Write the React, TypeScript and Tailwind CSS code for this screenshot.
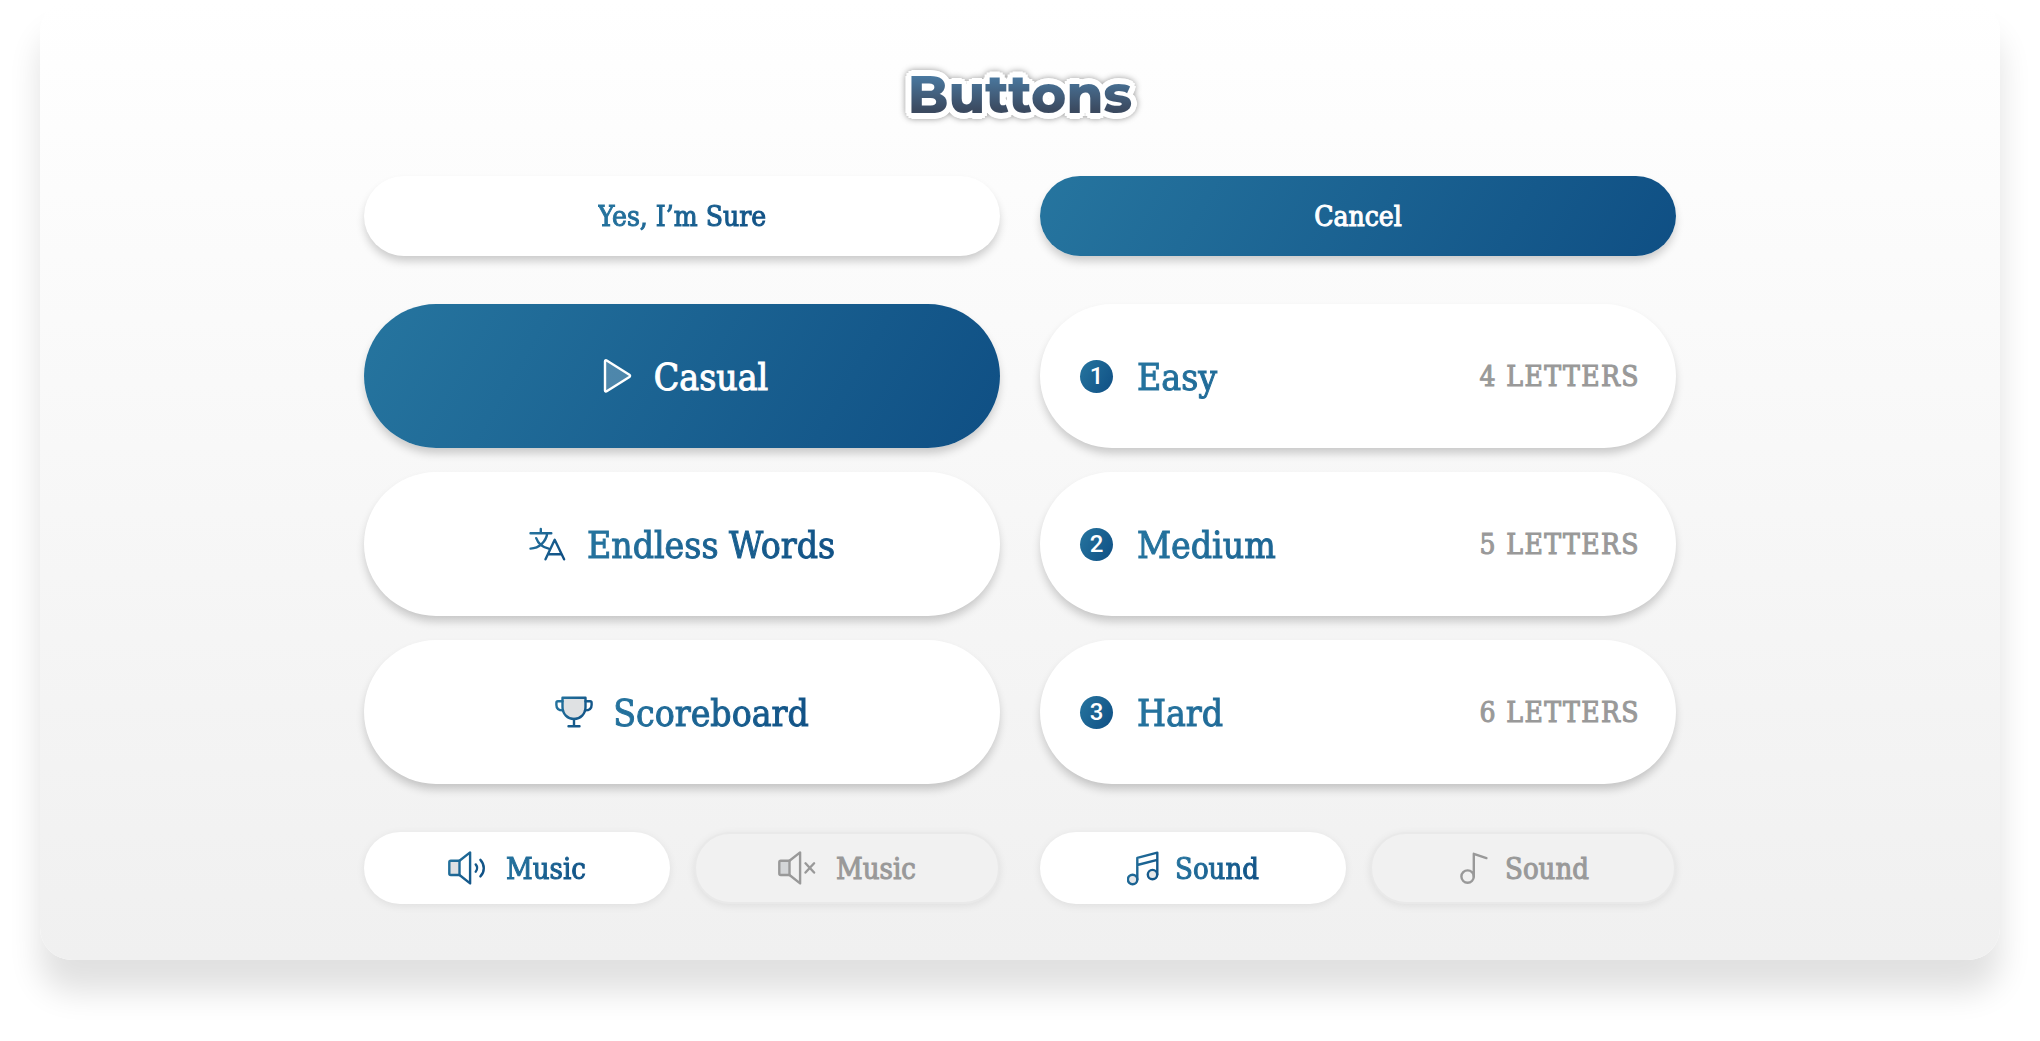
import { ReactNode } from 'react'
import clsx from 'clsx'

const slab = `font-['Roboto_Slab','DejaVu_Serif_Condensed','DejaVu_Serif',serif] [-webkit-text-stroke:1px]`
const fill = 'bg-[linear-gradient(120deg,#26759f,#0f4f84)]'
const gradientText = `${fill} bg-clip-text text-transparent`
const raised = 'shadow-[0_6px_10px_-1px_rgba(0,0,0,0.2)]'
// ring of shadows, gives the title a rounded white outline
const outline =
  'before:[text-shadow:6px_0_white,5px_3px_white,3px_5px_white,0_6px_white,-3px_5px_white,-5px_3px_white,-6px_0_white,-5px_-3px_white,-3px_-5px_white,0_-6px_white,3px_-5px_white,5px_-3px_white]'

function Gradients() {
  return (
    <svg width="0" height="0" className="absolute" aria-hidden="true">
      <defs>
        <linearGradient id="blue" gradientUnits="userSpaceOnUse" x1="0" y1="8" x2="36" y2="28">
          <stop offset="0" stopColor="#26759f" />
          <stop offset="1" stopColor="#0f4f84" />
        </linearGradient>
      </defs>
    </svg>
  )
}

function Icon({ width = 38, color = 'url(#blue)', children }: { width?: number; color?: string; children: ReactNode }) {
  return (
    <svg
      width={width}
      height="40"
      viewBox={`0 0 ${width} 40`}
      fill="none"
      stroke={color}
      strokeWidth="2.4"
      strokeLinecap="round"
      strokeLinejoin="round"
      className="shrink-0"
      aria-hidden="true"
    >
      {children}
    </svg>
  )
}

function PlayIcon() {
  return (
    <Icon color="#ffffff">
      <path d="M9 5.4c0-1 .9-1.400 1.700-.9l22.700 14.200c.9.600.9 1.600 0 2.200L10.700 35.300c-.8.5-1.700.1-1.700-.9z" fill="#ffffff" fillOpacity=".22" />
    </Icon>
  )
}

function TranslateIcon() {
  return (
    <Icon>
      <path d="M1.500 9.300H22.300M11.800 5v4.300M18.300 9.300C17 17.500 10.500 24.300 1.500 24.600M7.200 14.200c2 5.400 6.500 9.300 12.500 10.400M16.500 35.300l9.200-19.500 9.400 19.500M19.200 30.300h13.400" />
    </Icon>
  )
}

function TrophyIcon() {
  return (
    <Icon>
      <path d="M7.500 5.700h23v9.300c0 7-5 12-11.500 12S7.500 22 7.500 15z" fill="#808890" fillOpacity=".25" />
      <path d="M19 27v7.300M13.500 34.300h11M7.500 9.300H2.900c-.9 0-1.500.6-1.500 1.500v2.200c0 3.400 2.400 5.400 6.600 5.400M30.500 9.300h4.600c.9 0 1.500.6 1.500 1.500v2.200c0 3.400-2.400 5.400-6.600 5.400" />
    </Icon>
  )
}

function SpeakerIcon({ off }: { off?: boolean }) {
  return (
    <Icon color={off ? '#999999' : undefined}>
      <path d="M11.500 12.800H2.800c-.9 0-1.500.6-1.500 1.500v11.200c0 .9.600 1.500 1.500 1.500h8.700z" fill="#808890" fillOpacity=".25" />
      <path d="M11.500 12.800 22.100 4.400v31L11.500 27" />
      {off ? (
        <path d="m27.500 15.300 8.600 9.200M36.100 15.300l-8.600 9.200" />
      ) : (
        <path d="M27.700 16.400c1.800 2.100 1.800 5.200 0 7.300M32.400 11.800c4.500 4.700 4.500 12 0 16.600" />
      )}
    </Icon>
  )
}

function NotesIcon() {
  return (
    <Icon width={32}>
      <circle cx="5.600" cy="31.500" r="4.700" fill="#808890" fillOpacity=".2" />
      <circle cx="25.500" cy="26.600" r="4.700" fill="#808890" fillOpacity=".2" />
      <path d="M10.300 31.500V9.800l20-5.200v22M10.300 17l20-5.200" />
    </Icon>
  )
}

function NoteIcon() {
  return (
    <Icon width={32} color="#999999">
      <circle cx="10.600" cy="28.600" r="6.200" />
      <path d="M16.800 28.600V5.800l12.600 4.300" />
    </Icon>
  )
}

function ActionButton({ children, primary }: { children: ReactNode; primary?: boolean }) {
  return (
    <button className={clsx('h-20 rounded-full pt-0.5 text-[28px] leading-9', raised, primary ? `${fill} text-white` : 'bg-white')}>
      <span className={primary ? '' : gradientText}>{children}</span>
    </button>
  )
}

function MenuButton({ icon, label, primary }: { icon: ReactNode; label: string; primary?: boolean }) {
  return (
    <button
      className={clsx(
        'flex h-36 items-center justify-center gap-5 rounded-full text-[37px] leading-12',
        raised,
        primary ? `${fill} text-white` : 'bg-white'
      )}
    >
      {icon}
      <span className={clsx('pt-1', !primary && gradientText)}>{label}</span>
    </button>
  )
}

function LevelButton({ level, label }: { level: number; label: string }) {
  return (
    <button className={`flex h-36 items-center rounded-full bg-white pr-9 pl-10 ${raised}`}>
      <span className={`flex size-[33px] items-center justify-center rounded-full font-[Roboto,sans-serif] text-2xl leading-8 font-medium text-white [-webkit-text-stroke:0] ${fill}`}>
        {level}
      </span>
      <span className={`ml-6 flex-1 pt-1 text-left text-[37px] leading-12 ${gradientText}`}>{label}</span>
      <span className="pt-0.5 text-[28px] leading-9 tracking-wider text-[#999999]">{level + 3} LETTERS</span>
    </button>
  )
}

function Toggle({ icon, label, on }: { icon: ReactNode; label: string; on?: boolean }) {
  return (
    <button
      aria-pressed={!!on}
      className={clsx(
        'flex h-18 items-center justify-center rounded-full text-[29px] leading-9 shadow-[0_2px_8px_rgba(0,0,0,0.08)]',
        label === 'Music' ? 'gap-5' : 'gap-4',
        on ? 'bg-white' : 'border-2 border-[#e9e9e9] bg-[#f1f1f1] text-[#999999]'
      )}
    >
      {icon}
      <span className={clsx('pt-0.5', on && gradientText)}>{label}</span>
    </button>
  )
}

export default function App() {
  return (
    <div className="bg-white px-10 pb-20">
      <Gradients />
      <main className={`rounded-[32px] bg-linear-to-b from-white to-[#f0f0f0] px-6 pb-14 shadow-[0_32px_32px_rgba(0,0,0,0.12)] ${slab}`}>
        <div className="mx-auto flex max-w-[1312px] flex-col items-center gap-12 pt-[60px]">
          <h1
            data-text="Buttons"
            className={`relative isolate font-['Montserrat','Inter',sans-serif] text-[53px] leading-[68px] font-extrabold [-webkit-text-stroke:0] before:absolute before:inset-0 before:-z-10 before:text-white before:drop-shadow-[0_0_3px_rgba(0,0,0,0.4)] before:content-[attr(data-text)] ${outline}`}
          >
            <span className="bg-linear-to-b from-[#4a7ba3] from-20% to-[#3b4a60] to-75% bg-clip-text text-transparent">Buttons</span>
          </h1>

          <section className="grid w-full grid-cols-2 gap-10">
            <ActionButton>Yes, I’m Sure</ActionButton>
            <ActionButton primary>Cancel</ActionButton>
          </section>

          <section className="grid w-full grid-cols-2 gap-x-10 gap-y-6">
            <MenuButton icon={<PlayIcon />} label="Casual" primary />
            <LevelButton level={1} label="Easy" />
            <MenuButton icon={<TranslateIcon />} label="Endless Words" />
            <LevelButton level={2} label="Medium" />
            <MenuButton icon={<TrophyIcon />} label="Scoreboard" />
            <LevelButton level={3} label="Hard" />
          </section>

          <section className="grid w-full grid-cols-2 gap-10">
            <div className="grid grid-cols-2 gap-6">
              <Toggle icon={<SpeakerIcon />} label="Music" on />
              <Toggle icon={<SpeakerIcon off />} label="Music" />
            </div>
            <div className="grid grid-cols-2 gap-6">
              <Toggle icon={<NotesIcon />} label="Sound" on />
              <Toggle icon={<NoteIcon />} label="Sound" />
            </div>
          </section>
        </div>
      </main>
    </div>
  )
}
